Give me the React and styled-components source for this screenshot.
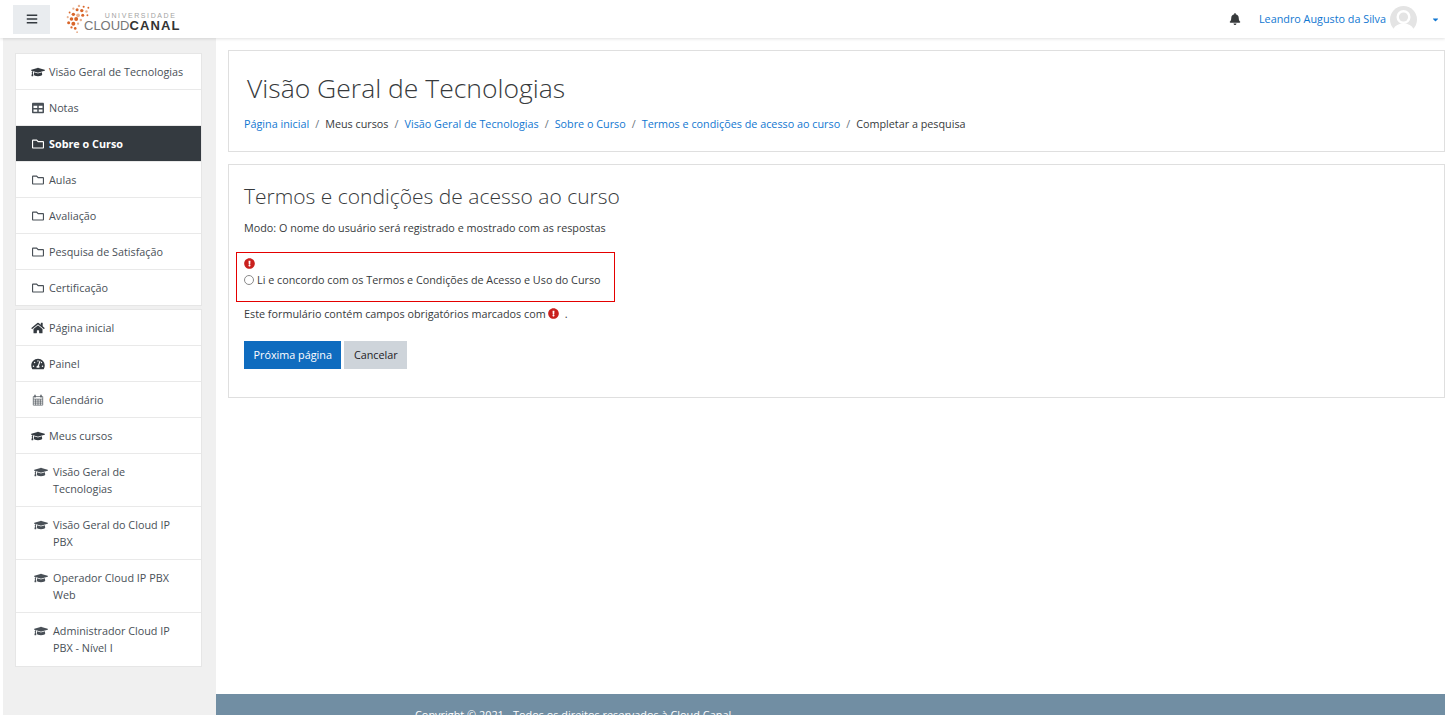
import React from "react";
import styled, { createGlobalStyle } from "styled-components";
import { FaGraduationCap, FaTable, FaRegFolder, FaHome, FaTachometerAlt, FaBell, FaExclamationCircle, FaBars, FaCaretDown } from "react-icons/fa";

const Global = createGlobalStyle`
  html, body { margin: 0; padding: 0; height: 715px; overflow: hidden; background: #fff; }
  * { box-sizing: border-box; }
  body { font-family: "Open Sans", "Noto Sans", sans-serif; font-size: 10.8px; color: #373a3c; }
`;
const Page = styled.div`display:flex;flex-direction:column;height:715px;overflow:hidden;`;
const Navbar = styled.header`
  height: 38px; flex: none; display:flex; align-items:center; background:#fff;
  box-shadow: 0 1px 3px rgba(0,0,0,.12); position: relative; z-index: 2; padding: 0 6px 0 13px;
`;
const MenuButton = styled.button`
  width:37px;height:29px;border:0;background:#e9ecef;color:#343a40;display:flex;align-items:center;justify-content:center;padding:0;font-size:12px;
`;
const Logo = styled.div`display:flex;align-items:center;margin-left:14px;`;
const LogoText = styled.div`display:flex;flex-direction:column;align-items:flex-end;margin:6px 0 0 -9px;font-family:"Liberation Sans",sans-serif;`;
const LogoTop = styled.span`font-size:7px;color:#a3a3a3;letter-spacing:1.6px;line-height:8px;margin-right:4px;`;
const LogoBottom = styled.span`font-size:13px;color:#777;line-height:12px;b{color:#333;font-weight:700;letter-spacing:1.1px;}`;
const UserArea = styled.div`margin-left:auto;display:flex;align-items:center;`;
const Bell = styled.span`color:#373a3c;font-size:12px;display:flex;margin-right:18px;`;
const UserName = styled.a`color:#1177d1;padding-bottom:2px;`;
const Avatar = styled.svg`width:27px;height:27px;margin-left:4px;flex:none;`;
const Caret = styled.span`color:#1177d1;display:flex;font-size:9px;margin-left:14px;margin-right:-1px;`;
const Body = styled.div`flex:1;display:flex;min-height:0;`;
const Sidebar = styled.aside`
  width:213px;margin-left:3px;flex:none;background:#f0f0f0;padding:15px 14px 0 12px;
`;
const NavBlock = styled.nav`
  background:#fff;border:1px solid #e6e6e6;margin-bottom:3px;
`;
const NavItem = styled.a`
  display:flex;align-items:${p=>p.$wrap?"flex-start":"center"};min-height:${p=>p.$h||36}px;
  padding:${p=>p.$wrap?"9px 24px 0 18px":"0 4px 0 15px"};
  background:${p=>p.$active?"#343a40":"#fff"};color:${p=>p.$active?"#fff":"#495057"};
  font-weight:${p=>p.$active?700:400};
  border-top:${p=>p.$first?"0":"1px solid #e9e9e9"};line-height:17px;
  svg{flex:none;width:14px;height:${p=>p.$ic||12}px;margin-right:${p=>p.$wrap?5:4}px;margin-top:${p=>p.$wrap?2:0}px;color:${p=>p.$dark?"#343a40":"currentColor"};}
`;
const Main = styled.main`flex:1;display:flex;flex-direction:column;min-width:0;`;
const Content = styled.div`flex:1;padding:12px 0 0 12px;`;
const Card = styled.section`
  background:#fff;border:1px solid #dfdfdf;margin-bottom:12px;
`;
const HeaderCard = styled(Card)`height:102px;padding:19px 15px 0 15px;`;
const Title = styled.h1`margin:0 0 0 3px;font-weight:300;font-size:26.5px;line-height:36px;color:#373a3c;`;
const Breadcrumb = styled.ol`list-style:none;margin:10px 0 0;padding:0;display:flex;line-height:16px;`;
const Crumb = styled.li`
  color:#373a3c;
  a{color:#1177d1;}
  &+&::before{content:"/";padding:0 6px;color:#6c757d;}
`;
const FormCard = styled(Card)`height:234px;padding:18px 15px 0 15px;`;
const H2 = styled.h2`margin:0;font-size:21px;font-weight:300;line-height:26px;color:#373a3c;`;
const Mode = styled.p`margin:11px 0 0;line-height:16px;`;
const ErrorBox = styled.div`
  border:1px solid #e40000;width:379px;height:50px;margin:16px 0 0 -8px;padding:3px 0 0 7px;
`;
const Err = styled.span`color:#c9211e;display:inline-flex;font-size:11px;`;
const ErrRow = styled.div`height:14px;display:flex;align-items:center;`;
const RadioRow = styled.label`display:flex;align-items:center;height:19px;`;
const Radio = styled.span`width:10px;height:10px;border-radius:50%;border:1px solid #8a8a8a;background:#fff;margin-right:3px;`;
const Note = styled.p`margin:3px 0 0;display:flex;align-items:center;height:16px;${Err}{margin:0 6px 0 2px;}`;
const Buttons = styled.div`display:flex;gap:3px;margin-top:20px;`;
const Btn = styled.button`
  height:28px;border:0;padding:0 9.5px 2px;font:inherit;
  background:${p=>p.$primary?"#0f6cbf":"#ced4da"};color:${p=>p.$primary?"#fff":"#1d2125"};
`;
const Footer = styled.footer`
  height:21px;flex:none;background:#718ea3;color:#fff;overflow:hidden;padding:13px 0 0 199px;line-height:16px;font-size:10.9px;
`;

const dots = [[15,2,1.3],[20,3,1.1],[25,4,1],[9,5,1.2],[13,6,1.6],[18,7,1.8],[23,8,1.3],[5,9,1],[9,11,1.8],[14,12,2],[19,12,1.6],[24,12,1],[3,14,1.1],[7,16,1.9],[12,16,2.1],[17,17,1.3],[4,20,1.6],[9,21,2.1],[14,21,1.2],[7,25,1.2],[11,26,1.4],[13,30,1]];
const LogoMark = () => (
  <svg width="29" height="30" viewBox="0 0 29 32" aria-hidden="true">
    {dots.map(([x,y,r],i)=><circle key={i} cx={x} cy={y} r={r} fill={i%3===0?"#e8b08f":"#d9662a"} />)}
  </svg>
);
const UserPic = () => (
  <Avatar viewBox="0 0 27 27" aria-hidden="true">
    <circle cx="13.5" cy="13.5" r="13.5" fill="#e4e4e4" />
    <circle cx="13.5" cy="11" r="7" fill="#fff" />
    <circle cx="13.5" cy="11" r="4.6" fill="#e4e4e4" />
    <path d="M3.5 23c1.5-4 6-5 8-5.5h4c2 .5 6.500 1.500 8 5.500a13.500 13.500 0 0 1-20 0z" fill="#fff" />
  </Avatar>
);
const CalendarIcon = () => (
  <svg viewBox="0 0 14 14" aria-hidden="true">
    <path d="M1.500 3h11v10h-11zM1.500 6h11M1.500 8.300h11M1.500 10.600h11M4.200 6v7M7 6v7M9.800 6v7" fill="none" stroke="currentColor" strokeWidth=".8" />
    <path d="M3.500 1v3M10.500 1v3" fill="none" stroke="currentColor" strokeWidth="1.500" />
  </svg>
);
const Cap = FaGraduationCap;

export default function App(){
  return (
    <Page>
      <Global/>
      <Navbar>
        <MenuButton aria-label="menu"><FaBars/></MenuButton>
        <Logo>
          <LogoMark/>
          <LogoText>
            <LogoTop>UNIVERSIDADE</LogoTop>
            <LogoBottom>CLOUD<b>CANAL</b></LogoBottom>
          </LogoText>
        </Logo>
        <UserArea>
          <Bell><FaBell/></Bell>
          <UserName>Leandro Augusto da Silva</UserName>
          <UserPic/>
          <Caret><FaCaretDown/></Caret>
        </UserArea>
      </Navbar>
      <Body>
        <Sidebar>
          <NavBlock>
            <NavItem $first $h={35} $ic={14} $dark><Cap/>Visão Geral de Tecnologias</NavItem>
            <NavItem><FaTable/>Notas</NavItem>
            <NavItem $active><FaRegFolder/>Sobre o Curso</NavItem>
            <NavItem><FaRegFolder/>Aulas</NavItem>
            <NavItem><FaRegFolder/>Avaliação</NavItem>
            <NavItem><FaRegFolder/>Pesquisa de Satisfação</NavItem>
            <NavItem><FaRegFolder/>Certificação</NavItem>
          </NavBlock>
          <NavBlock>
            <NavItem $first $h={35} $dark><FaHome/>Página inicial</NavItem>
            <NavItem $dark><FaTachometerAlt/>Painel</NavItem>
            <NavItem><CalendarIcon/>Calendário</NavItem>
            <NavItem $ic={14} $dark><Cap/>Meus cursos</NavItem>
            <NavItem $wrap $h={53} $ic={14}><Cap/>Visão Geral de Tecnologias</NavItem>
            <NavItem $wrap $h={53} $ic={14}><Cap/>Visão Geral do Cloud IP PBX</NavItem>
            <NavItem $wrap $h={53} $ic={14}><Cap/>Operador Cloud IP PBX Web</NavItem>
            <NavItem $wrap $h={54} $ic={14}><Cap/>Administrador Cloud IP PBX - Nível I</NavItem>
          </NavBlock>
        </Sidebar>
        <Main>
          <Content>
            <HeaderCard>
              <Title>Visão Geral de Tecnologias</Title>
              <Breadcrumb>
                <Crumb><a>Página inicial</a></Crumb>
                <Crumb>Meus cursos</Crumb>
                <Crumb><a>Visão Geral de Tecnologias</a></Crumb>
                <Crumb><a>Sobre o Curso</a></Crumb>
                <Crumb><a>Termos e condições de acesso ao curso</a></Crumb>
                <Crumb>Completar a pesquisa</Crumb>
              </Breadcrumb>
            </HeaderCard>
            <FormCard>
              <H2>Termos e condições de acesso ao curso</H2>
              <Mode>Modo: O nome do usuário será registrado e mostrado com as respostas</Mode>
              <ErrorBox>
                <ErrRow><Err><FaExclamationCircle/></Err></ErrRow>
                <RadioRow><Radio/>Li e concordo com os Termos e Condições de Acesso e Uso do Curso</RadioRow>
              </ErrorBox>
              <Note>Este formulário contém campos obrigatórios marcados com <Err><FaExclamationCircle/></Err> .</Note>
              <Buttons>
                <Btn $primary>Próxima página</Btn>
                <Btn>Cancelar</Btn>
              </Buttons>
            </FormCard>
          </Content>
          <Footer>Copyright © 2021 - Todos os direitos reservados à Cloud Canal</Footer>
        </Main>
      </Body>
    </Page>
  );
}
